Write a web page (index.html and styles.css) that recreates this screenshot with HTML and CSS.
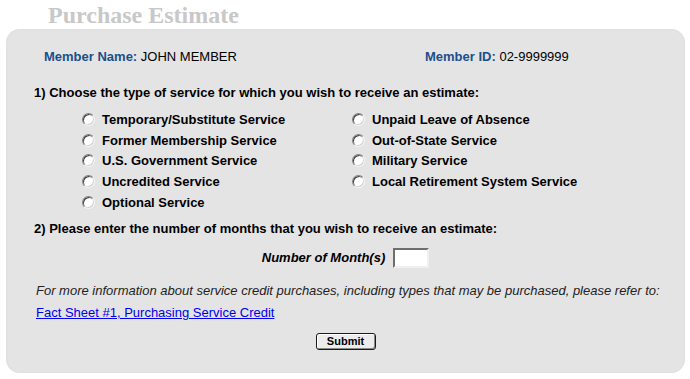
FILE: index.html
```html
<!DOCTYPE html>
<html>
<head>
<meta charset="utf-8">
<link rel="stylesheet" href="styles.css">
</head>
<body>
<h1 class="title">Purchase Estimate</h1>
<form class="panel">
  <div class="member">
    <div><span class="label">Member Name:</span> JOHN MEMBER</div>
    <div><span class="label">Member ID:</span> 02-9999999</div>
  </div>
  <p class="question q1">1) Choose the type of service for which you wish to receive an estimate:</p>
  <div class="options">
    <label class="opt"><input type="radio" name="svc"><span>Temporary/Substitute Service</span></label>
    <label class="opt"><input type="radio" name="svc"><span>Unpaid Leave of Absence</span></label>
    <label class="opt"><input type="radio" name="svc"><span>Former Membership Service</span></label>
    <label class="opt"><input type="radio" name="svc"><span>Out-of-State Service</span></label>
    <label class="opt"><input type="radio" name="svc"><span>U.S. Government Service</span></label>
    <label class="opt"><input type="radio" name="svc"><span>Military Service</span></label>
    <label class="opt"><input type="radio" name="svc"><span>Uncredited Service</span></label>
    <label class="opt"><input type="radio" name="svc"><span>Local Retirement System Service</span></label>
    <label class="opt"><input type="radio" name="svc"><span>Optional Service</span></label>
  </div>
  <p class="question q2">2) Please enter the number of months that you wish to receive an estimate:</p>
  <div class="months">
    <label class="months-label" for="m">Number of Month(s)</label>
    <input class="months-input" id="m" type="text">
  </div>
  <p class="info">For more information about service credit purchases, including types that may be purchased, please refer to:</p>
  <p class="linkline"><a href="#">Fact Sheet #1, Purchasing Service Credit</a></p>
  <div class="actions"><button type="button" class="submit">Submit</button></div>
</form>
</body>
</html>
```

FILE: styles.css
```css
html, body {
  margin: 0;
  padding: 0;
  background: #ffffff;
}
body {
  font-family: "Liberation Sans", Arial, sans-serif;
  font-size: 13px;
  color: #000;
}
.title {
  margin: 0 0 0 48px;
  height: 29px;
  font-family: "Liberation Serif", "Times New Roman", serif;
  font-weight: bold;
  font-size: 24px;
  line-height: 30px;
  color: #c8c8c8;
}
.panel {
  display: block;
  margin: 0 5px 0 6px;
  padding: 20px 0 23px 28px;
  background: #e4e4e4;
  border-radius: 14px;
  box-shadow: inset 0 0 2px #d6d6d6;
}
.member {
  display: grid;
  grid-template-columns: 381px auto;
  margin-left: 10px;
  line-height: 16px;
}
.label {
  color: #1b4f8c;
  font-weight: bold;
}
.question {
  margin: 0;
  font-weight: bold;
  line-height: 16px;
}
.q1 { margin-top: 20px; }
.q2 { margin-top: 8px; }
.options {
  display: grid;
  grid-template-columns: 270px 270px;
  grid-auto-rows: 20.75px;
  margin: 8px 0 0 48px;
}
.opt {
  display: flex;
  align-items: center;
  gap: 7px;
  font-weight: bold;
}
.opt input {
  appearance: none;
  -webkit-appearance: none;
  margin: 0;
  width: 13px;
  height: 13px;
  border-radius: 50%;
  background: #ffffff;
  border: 1px solid;
  border-color: #808080 #f4f4f4 #f4f4f4 #808080;
  box-shadow: inset 1px 1px 0 #404040, inset -1px -1px 0 #d4d0c8;
  flex: none;
}
.months {
  display: flex;
  justify-content: center;
  align-items: center;
  gap: 8px;
  margin: 11px 28px 0 0;
}
.months-label {
  font-weight: bold;
  font-style: italic;
}
.months-input {
  box-sizing: border-box;
  width: 36px;
  height: 20px;
  margin: 0;
  padding: 0;
  background: #fff;
  border: 2px solid;
  border-color: #6e6e6e #f0f0f0 #f0f0f0 #6e6e6e;
  outline: none;
}
.info {
  margin: 15px 0 0 2px;
  font-style: italic;
  line-height: 16px;
  color: #222;
}
.linkline {
  margin: 6px 0 0 2px;
  line-height: 16px;
}
.linkline a {
  color: #0000ee;
  text-decoration: underline;
}
.actions {
  display: flex;
  justify-content: center;
  margin: 12px 28px 0 0;
}
.submit {
  box-sizing: border-box;
  width: 60px;
  height: 17px;
  padding: 0;
  margin: 0;
  font-family: "Liberation Sans", Arial, sans-serif;
  font-size: 11px;
  font-weight: bold;
  line-height: 13px;
  color: #000;
  background: #ececec;
  border: 1px solid #1a1a1a;
  border-radius: 3px;
  box-shadow: inset 1px 1px 0 #ffffff, inset -1px -1px 0 #8a8a8a;
}
```
